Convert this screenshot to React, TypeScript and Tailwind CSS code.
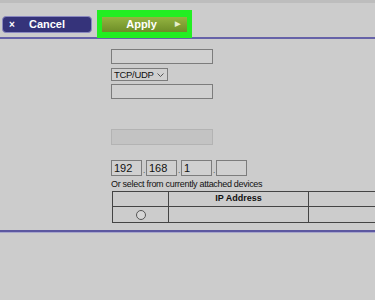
import React from "react";

const boxCls = "border border-[#7c7c7c] bg-[#d0d0d0]";

const IpBox = ({ value }: { value: string }) => (
  <div className={`w-[31px] h-[16px] ${boxCls} px-[2px] text-[11px] leading-[14px] text-[#111]`}>{value}</div>
);

const Dot = () => <div className="w-[4px] flex items-end justify-center text-[8px] leading-[10px] text-[#333]">.</div>;

const cell = "border-r border-b border-[#444]";

export default function App() {
  return (
    <div
      className="w-[375px] h-[300px] bg-[#cccccc] overflow-hidden flex flex-col"
      style={{ fontFamily: '"Liberation Sans", Arial, sans-serif' }}
    >
      <div className="h-[3px] bg-[#bdbdbd]" />

      {/* button bar */}
      <div className="h-[34px] flex items-start relative z-10">
        <button className="ml-[2px] mt-[13px] w-[90px] h-[17px] rounded-[4px] bg-[#35337a] border border-[#8a88c0] flex items-center text-white text-[11px] font-bold">
          <span className="w-[18px] text-center text-[10px]">×</span>
          <span className="flex-1 text-center pr-[18px]">Cancel</span>
        </button>
        <div className="ml-[5px] mt-[7px] w-[95px] h-[28px] bg-[#22ee22] flex items-center justify-center">
          <div className="w-[85px] h-[15px] bg-gradient-to-b from-[#94b440] to-[#6e8e28] flex items-center text-white text-[11px] font-bold">
            <span className="flex-1 text-center pl-[6px]">Apply</span>
            <span className="w-[12px] text-[7px] text-[#e6eecc]">▶</span>
          </div>
        </div>
      </div>
      <div className="h-[2px] bg-[#6662a8]" />

      {/* form */}
      <div className="pl-[111px] pt-[10px] flex flex-col">
        <div className={`w-[102px] h-[15px] ${boxCls}`} />
        <div className={`mt-[4px] w-[57px] h-[13px] ${boxCls} flex items-center pl-[2px] pr-[3px] text-[9.5px] text-[#111]`}>
          <span className="leading-[12px] flex-1 tracking-[-0.3px]">TCP/UDP</span>
          <svg width="7" height="4" viewBox="0 0 7 4" className="shrink-0">
            <path d="M0.5 0.5 L3.5 3.5 L6.5 0.5" fill="none" stroke="#555" strokeWidth="1" />
          </svg>
        </div>
        <div className={`mt-[3px] w-[102px] h-[15px] ${boxCls}`} />
        <div className="mt-[30px] w-[102px] h-[16px] border border-[#b3b3b3] bg-[#c3c3c3]" />

        <div className="mt-[15px] flex">
          <IpBox value="192" />
          <Dot />
          <IpBox value="168" />
          <Dot />
          <IpBox value="1" />
          <Dot />
          <IpBox value="" />
        </div>
        <div className="mt-[2px] text-[9px] leading-[12px] text-[#111] tracking-[-0.3px]">
          Or select from currently attached devices
        </div>
      </div>

      {/* devices table */}
      <div className="ml-[112px] mt-[1px] w-[280px] grid grid-cols-[56px_140px_84px] border-t border-l border-[#444] text-[9px] text-[#111]">
        <div className={`h-[15px] ${cell}`} />
        <div className={`h-[15px] ${cell} flex items-center justify-center font-bold`}>IP Address</div>
        <div className={`h-[15px] ${cell}`} />
        <div className={`h-[16px] ${cell} flex items-center justify-center`}>
          <div className="w-[10px] h-[10px] rounded-full border border-[#555] bg-[#d6d6d6]" />
        </div>
        <div className={`h-[16px] ${cell}`} />
        <div className={`h-[16px] ${cell}`} />
      </div>

      <div className="mt-[7px] h-[2px] bg-[#5c58a0]" />
      <div className="h-[1px] bg-[#a8a6cc]" />
    </div>
  );
}
